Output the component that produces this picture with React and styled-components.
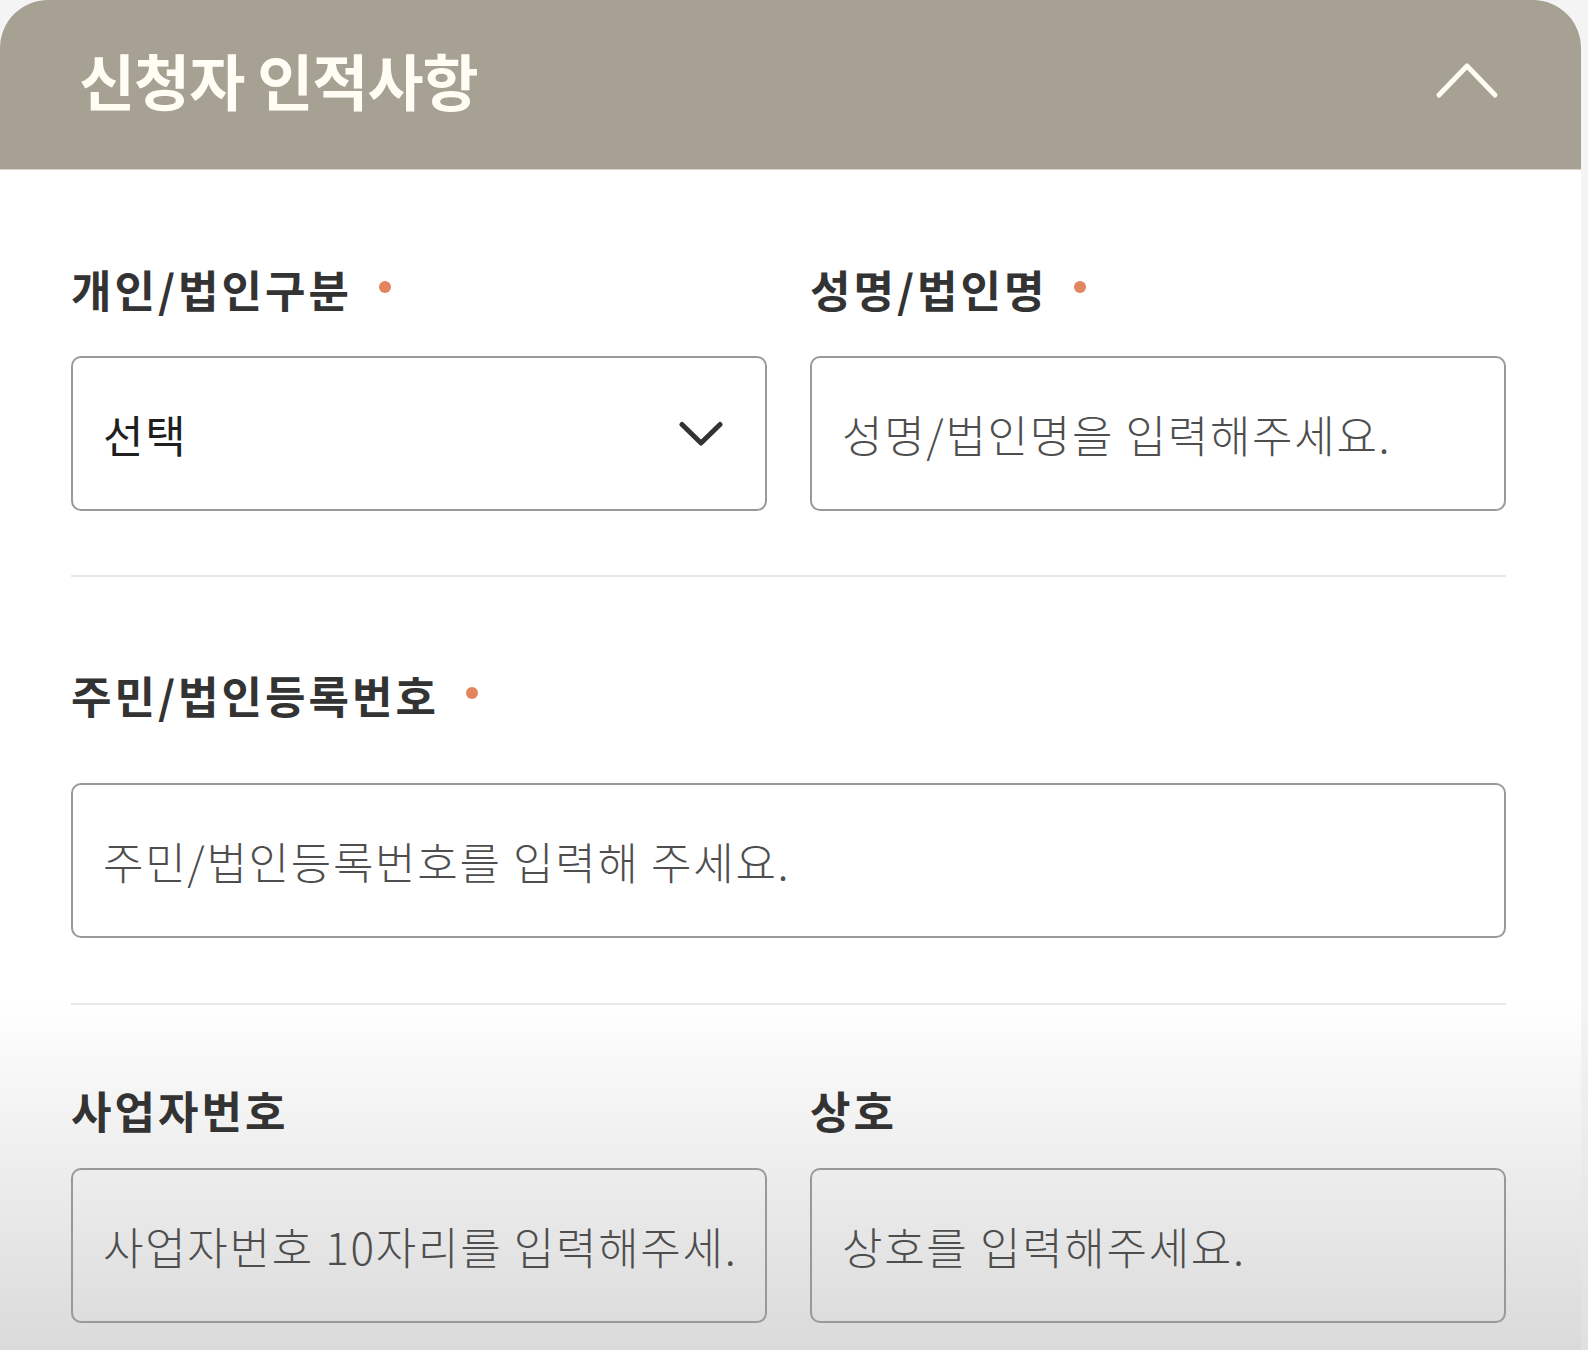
import React from 'react';
import styled, { createGlobalStyle } from 'styled-components';

const GlobalStyle = createGlobalStyle`
  html, body {
    margin: 0;
    padding: 0;
    background: #efefef;
    font-family: "Noto Sans CJK KR", "Noto Sans", sans-serif;
  }
`;

const Page = styled.div`
  display: flex;
  width: 1588px;
  height: 1350px;
  overflow: hidden;
  background: linear-gradient(to bottom, #f4f4f4 0, #f4f4f4 1000px, #e0e0e0 100%);
`;

const Card = styled.div`
  width: 1581px;
  display: flex;
  flex-direction: column;
`;

const Header = styled.div`
  height: 170px;
  box-sizing: border-box;
  display: flex;
  align-items: center;
  justify-content: space-between;
  padding: 0 82px 10px 79px;
  background: #a7a194;
  border-radius: 48px 48px 0 0;
  border-bottom: 1px solid #d8d3c6;
`;

const Title = styled.h1`
  margin: 0;
  font-size: 61px;
  font-weight: 700;
  line-height: 1;
  color: #fffdf4;
  letter-spacing: -1px;
`;

const Body = styled.div`
  flex: 1;
  padding: 0 75px 0 71px;
  background: linear-gradient(to bottom, #ffffff 0, #ffffff 830px, #dadada 100%);
`;

const Section = styled.div`
  padding-top: ${p => p.$top}px;
  padding-bottom: ${p => p.$bottom || 0}px;
`;

const Row = styled.div`
  display: grid;
  grid-template-columns: ${p => (p.$cols === 2 ? 'minmax(0, 1fr) minmax(0, 1fr)' : 'minmax(0, 1fr)')};
  column-gap: 43px;
`;

const Field = styled.div`
  display: flex;
  flex-direction: column;
  gap: ${p => p.$gap}px;
  min-width: 0;
`;

const Label = styled.div`
  display: flex;
  align-items: center;
  font-size: 44px;
  font-weight: 700;
  line-height: 1;
  color: #333333;
  letter-spacing: 3px;
`;

const Required = styled.span`
  width: 12px;
  height: 12px;
  border-radius: 50%;
  background: #e3855f;
  margin-left: 27px;
  margin-top: -4px;
`;

const Box = styled.div`
  height: 155px;
  min-width: 0;
  box-sizing: border-box;
  border: 2px solid #999999;
  border-radius: 10px;
  display: flex;
  align-items: center;
  justify-content: space-between;
  padding: 0 42px 0 30px;
  background: transparent;
  font-size: 44px;
  font-weight: ${p => (p.$value ? 400 : 300)};
  color: ${p => (p.$value ? '#1f1f1f' : '#4e4e4e')};
  letter-spacing: 1.7px;
  white-space: nowrap;
  overflow: hidden;
`;

const Divider = styled.hr`
  margin: 0;
  border: 0;
  height: 2px;
  background: #e8e8e8;
`;

const ChevronUp = () => (
  <svg width="64" height="38" viewBox="0 0 64 38" fill="none">
    <path d="M4 34 L32 5 L60 34" stroke="#fffdf4" strokeWidth="5" strokeLinecap="round" strokeLinejoin="round" />
  </svg>
);

const ChevronDown = () => (
  <svg width="44" height="26" viewBox="0 0 44 26" fill="none">
    <path d="M3 3.5 L22 22 L41 3.5" stroke="#333" strokeWidth="5" strokeLinecap="round" strokeLinejoin="round" />
  </svg>
);

export default function App() {
  return (
    <>
      <GlobalStyle />
      <Page>
        <Card>
          <Header>
            <Title>신청자 인적사항</Title>
            <ChevronUp />
          </Header>
          <Body>
            <Section $top={97} $bottom={64}>
              <Row $cols={2}>
                <Field $gap={45}>
                  <Label>개인/법인구분<Required /></Label>
                  <Box $value>
                    <span>선택</span>
                    <ChevronDown />
                  </Box>
                </Field>
                <Field $gap={45}>
                  <Label>성명/법인명<Required /></Label>
                  <Box>성명/법인명을 입력해주세요.</Box>
                </Field>
              </Row>
            </Section>
            <Divider />
            <Section $top={96} $bottom={65}>
              <Row>
                <Field $gap={66}>
                  <Label>주민/법인등록번호<Required /></Label>
                  <Box>주민/법인등록번호를 입력해 주세요.</Box>
                </Field>
              </Row>
            </Section>
            <Divider />
            <Section $top={83}>
              <Row $cols={2}>
                <Field $gap={36}>
                  <Label>사업자번호</Label>
                  <Box>사업자번호 10자리를 입력해주세.</Box>
                </Field>
                <Field $gap={36}>
                  <Label>상호</Label>
                  <Box>상호를 입력해주세요.</Box>
                </Field>
              </Row>
            </Section>
          </Body>
        </Card>
      </Page>
    </>
  );
}
